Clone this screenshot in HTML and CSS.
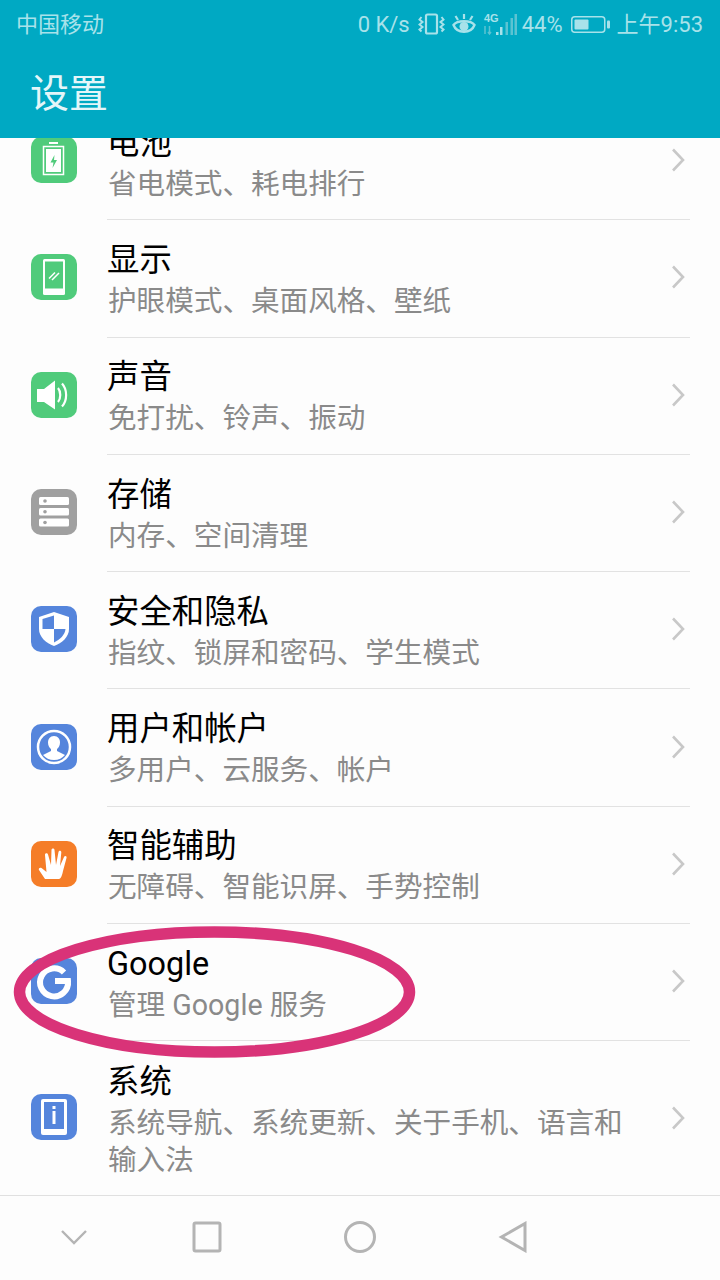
FILE: index.html
```html
<!DOCTYPE html>
<html lang="zh-CN">
<head>
    <meta charset="UTF-8">
    <meta name="viewport" content="width=device-width, initial-scale=1.0">
    <title>设置</title>
    <link rel="stylesheet" href="styles.css">
</head>
<body>
<div class="phone">
    <header class="topbar">
        <div class="status">
            <span class="carrier">中国移动</span>
            <div class="status-right">
                <span class="speed">0 K/s</span>
                <svg class="st-vibrate" width="27" height="24" viewBox="0 0 27 24" fill="none" stroke="#a8e2ea">
                    <rect x="8" y="2.500" width="11" height="19" rx="1.500" stroke-width="2.200"/>
                    <path d="M3.500 5l-2 2.500 3 2.500-3 2.500 3 2.500-3 2.500 2 2M23.500 5l2 2.500-3 2.500 3 2.500-3 2.500 3 2.500-2 2" stroke-width="2"/>
                </svg>
                <svg class="st-eye" width="24" height="22" viewBox="0 0 24 22" fill="none" stroke="#a8e2ea">
                    <path d="M1.500 12C5 7 19 7 22.500 12C19 21 5 21 1.500 12Z" stroke-width="2.400"/>
                    <circle cx="12" cy="13.500" r="4.500" fill="#a8e2ea" stroke="none"/>
                    <path d="M3.500 3l2.500 4M12 1v5M20.500 3L18 7" stroke-width="2.200"/>
                </svg>
                <svg class="st-signal" width="34" height="24" viewBox="0 0 34 24">
                    <text x="1" y="10" class="st-4g">4G</text>
                    <path d="M2 14v8M6.500 14v8M5 20l1.500 2 1.500-2" fill="none" stroke="#5cc3d2" stroke-width="1.500"/>
                    <rect x="13" y="20" width="2.500" height="3" fill="#a8e2ea"/>
                    <rect x="17" y="15" width="2.500" height="8" fill="#a8e2ea"/>
                    <rect x="22.500" y="10" width="2.500" height="13" fill="#5cc3d2"/>
                    <rect x="27.500" y="6" width="2.500" height="17" fill="#5cc3d2"/>
                    <rect x="31.500" y="2" width="2.500" height="21" fill="#5cc3d2"/>
                </svg>
                <span class="pct">44%</span>
                <svg class="st-battery" width="39" height="17" viewBox="0 0 39 17" fill="none">
                    <rect x=".75" y=".75" width="33" height="15.500" rx="3" stroke="#a8e2ea" stroke-width="1.500"/>
                    <rect x="3.500" y="3.500" width="14" height="10" rx="1" fill="#a8e2ea"/>
                    <rect x="36" y="4.500" width="3" height="8" rx="1" fill="#a8e2ea"/>
                </svg>
                <span class="clock">上午9:53</span>
            </div>
        </div>
        <h1 class="title">设置</h1>
    </header>

    <main class="list-wrap">
        <ul class="list">
            <li class="row">
                <svg class="icon" viewBox="0 0 46 46">
                    <rect width="46" height="46" rx="10" fill="#50cb7b"/>
                    <path d="M18 5h9v2h-9z" fill="#fff"/>
                    <rect x="12.500" y="9.500" width="20" height="28" fill="none" stroke="#fff" stroke-width="1.500"/>
                    <rect x="15" y="12" width="15" height="23" fill="#fff"/>
                    <path d="M23.500 18l-4 7.500h3l-1 5.500 4.500-8h-3z" fill="#50cb7b"/>
                </svg>
                <div class="row-body">
                    <div class="text">
                        <div class="name">电池</div>
                        <div class="desc">省电模式、耗电排行</div>
                    </div>
                    <svg class="arrow" viewBox="0 0 14 24"><path d="M2 1.500L12 12L2 22.500"/></svg>
                </div>
            </li>
            <li class="row">
                <svg class="icon" viewBox="0 0 46 46">
                    <rect width="46" height="46" rx="10" fill="#50cb7b"/>
                    <rect x="12" y="5" width="22" height="36" rx="1.500" fill="#fff"/>
                    <rect x="14" y="7.500" width="18" height="27" fill="#50cb7b"/>
                    <path d="M18 24.500l6-6M21 26l7-7" stroke="#fff" stroke-width="1.500" fill="none"/>
                </svg>
                <div class="row-body">
                    <div class="text">
                        <div class="name">显示</div>
                        <div class="desc">护眼模式、桌面风格、壁纸</div>
                    </div>
                    <svg class="arrow" viewBox="0 0 14 24"><path d="M2 1.500L12 12L2 22.500"/></svg>
                </div>
            </li>
            <li class="row">
                <svg class="icon" viewBox="0 0 46 46">
                    <rect width="46" height="46" rx="10" fill="#50cb7b"/>
                    <path d="M6 17h7l11-8.500v29L13 30H6z" fill="#fff"/>
                    <path d="M27 16c3 3.500 3 10.500 0 14M31 11.500c5.500 6 5.500 17 0 23" fill="none" stroke="#fff" stroke-width="2.200"/>
                </svg>
                <div class="row-body">
                    <div class="text">
                        <div class="name">声音</div>
                        <div class="desc">免打扰、铃声、振动</div>
                    </div>
                    <svg class="arrow" viewBox="0 0 14 24"><path d="M2 1.500L12 12L2 22.500"/></svg>
                </div>
            </li>
            <li class="row">
                <svg class="icon" viewBox="0 0 46 46">
                    <rect width="46" height="46" rx="10" fill="#a0a0a0"/>
                    <rect x="8" y="8" width="30" height="8" rx="1.500" fill="#fff"/>
                    <rect x="8" y="19" width="30" height="7.500" rx="1.500" fill="#fff"/>
                    <rect x="8" y="29.500" width="30" height="8" rx="1.500" fill="#fff"/>
                    <circle cx="14" cy="12" r="1.800" fill="#a0a0a0"/>
                    <circle cx="14" cy="22.700" r="1.800" fill="#a0a0a0"/>
                    <circle cx="14" cy="33.500" r="1.800" fill="#a0a0a0"/>
                </svg>
                <div class="row-body">
                    <div class="text">
                        <div class="name">存储</div>
                        <div class="desc">内存、空间清理</div>
                    </div>
                    <svg class="arrow" viewBox="0 0 14 24"><path d="M2 1.500L12 12L2 22.500"/></svg>
                </div>
            </li>
            <li class="row">
                <svg class="icon" viewBox="0 0 46 46">
                    <rect width="46" height="46" rx="10" fill="#5585dc"/>
                    <path d="M23 6l15 5v12c0 8-7 14-15 17C15 37 8 31 8 23V11z" fill="#fff"/>
                    <path d="M23 9.500V23H11.500V13zM23 23h11.500c-.5 6-5.500 10.500-11.500 13.500z" fill="#5585dc"/>
                </svg>
                <div class="row-body">
                    <div class="text">
                        <div class="name">安全和隐私</div>
                        <div class="desc">指纹、锁屏和密码、学生模式</div>
                    </div>
                    <svg class="arrow" viewBox="0 0 14 24"><path d="M2 1.500L12 12L2 22.500"/></svg>
                </div>
            </li>
            <li class="row">
                <svg class="icon" viewBox="0 0 46 46">
                    <rect width="46" height="46" rx="10" fill="#5585dc"/>
                    <circle cx="23" cy="23" r="16" fill="none" stroke="#fff" stroke-width="2.500"/>
                    <path d="M23 12c4 0 6 3 6 6.500 0 3-1.500 5.500-3 6.500v2l8 4c-2.500 3-6.500 5-11 5s-8.500-2-11-5l8-4v-2c-1.500-1-3-3.500-3-6.500C17 15 19 12 23 12z" fill="#fff"/>
                </svg>
                <div class="row-body">
                    <div class="text">
                        <div class="name">用户和帐户</div>
                        <div class="desc">多用户、云服务、帐户</div>
                    </div>
                    <svg class="arrow" viewBox="0 0 14 24"><path d="M2 1.500L12 12L2 22.500"/></svg>
                </div>
            </li>
            <li class="row">
                <svg class="icon" viewBox="0 0 46 46">
                    <rect width="46" height="46" rx="10" fill="#f57d28"/>
                    <path d="M14 38l-6-9c-1-1.500 1-3 2.500-2l5 4L14 14c-.3-2 2.500-2.500 3-.5L20 24l.5-15c0-2 3-2 3 0L25 24l2.500-13c.4-2 3-1.500 2.800.5L29 25l4-9c.8-1.800 3.200-1 2.500 1L32 30c-.8 4-2 8-4 8z" fill="#fff"/>
                </svg>
                <div class="row-body">
                    <div class="text">
                        <div class="name">智能辅助</div>
                        <div class="desc">无障碍、智能识屏、手势控制</div>
                    </div>
                    <svg class="arrow" viewBox="0 0 14 24"><path d="M2 1.500L12 12L2 22.500"/></svg>
                </div>
            </li>
            <li class="row">
                <svg class="icon" viewBox="0 0 46 46">
                    <rect width="46" height="46" rx="10" fill="#5585dc"/>
                    <path d="M33 14.500A14 14 0 1 0 37 23H24" fill="none" stroke="#fff" stroke-width="6"/>
                </svg>
                <div class="row-body">
                    <div class="text">
                        <div class="name">Google</div>
                        <div class="desc">管理 Google 服务</div>
                    </div>
                    <svg class="arrow" viewBox="0 0 14 24"><path d="M2 1.500L12 12L2 22.500"/></svg>
                </div>
            </li>
            <li class="row row-last">
                <svg class="icon" viewBox="0 0 46 46">
                    <rect width="46" height="46" rx="10" fill="#5585dc"/>
                    <rect x="10" y="5" width="26" height="36" rx="2" fill="#fff"/>
                    <rect x="13" y="8" width="20" height="27" fill="#5585dc"/>
                    <rect x="21.500" y="12" width="3" height="3" fill="#fff"/>
                    <rect x="21.500" y="17" width="3" height="13" fill="#fff"/>
                </svg>
                <div class="row-body">
                    <div class="text">
                        <div class="name">系统</div>
                        <div class="desc">系统导航、系统更新、关于手机、语言和输入法</div>
                    </div>
                    <svg class="arrow" viewBox="0 0 14 24"><path d="M2 1.500L12 12L2 22.500"/></svg>
                </div>
            </li>
        </ul>
    </main>

    <nav class="navbar">
        <svg class="nav-down" width="28" height="16" viewBox="0 0 28 16"><path d="M2 2l12 12L26 2"/></svg>
        <svg width="32" height="32" viewBox="0 0 32 32"><rect x="3" y="2" width="26" height="28" rx="1.500"/></svg>
        <svg width="32" height="32" viewBox="0 0 32 32"><circle cx="16" cy="16" r="14.500"/></svg>
        <svg width="32" height="32" viewBox="0 0 32 32"><path d="M28 2.500V29.500L4.500 16Z"/></svg>
    </nav>

    <svg class="ring" width="440" height="150" viewBox="0 0 440 150">
        <ellipse cx="214.500" cy="67" rx="195" ry="60"/>
    </svg>
</div>
</body>
</html>
```

FILE: styles.css
```css
* {
    box-sizing: border-box;
}
body {
    margin: 0;
    font-family: Roboto, "Noto Sans CJK SC", sans-serif;
    background-color: #fdfdfd;
}
.phone {
    position: relative;
    width: 720px;
    height: 1280px;
    display: flex;
    flex-direction: column;
    overflow: hidden;
}
.topbar {
    flex: none;
    height: 138px;
    background-color: #00a9c3;
    z-index: 1;
}
.status {
    height: 48px;
    padding: 0 17px 0 16px;
    display: flex;
    align-items: center;
    justify-content: space-between;
    color: #a8e2ea;
    font-size: 22px;
}
.status-right {
    display: flex;
    align-items: center;
}
.carrier, .clock {
    padding-bottom: 4px;
}
.st-vibrate {
    margin-left: 8px;
}
.st-eye {
    margin-left: 7px;
}
.st-signal {
    margin-left: 7px;
}
.st-4g {
    font: bold 11px "Liberation Sans", sans-serif;
    fill: #a8e2ea;
}
.pct {
    margin-left: 5px;
}
.st-battery {
    margin-left: 8px;
}
.clock {
    margin-left: 7px;
}
.title {
    margin: 0;
    padding: 4px 0 0 30px;
    color: #e4f6f9;
    font-size: 39px;
    font-weight: 400;
    line-height: 84px;
}
.list-wrap {
    flex: 1;
    overflow: hidden;
}
.list {
    list-style: none;
    margin: -35px 0 0;
    padding: 0;
}
.row {
    height: 117.3px;
    display: flex;
    align-items: center;
    padding-left: 31px;
}
.row-last {
    height: 155px;
}
.icon {
    flex: none;
    width: 46px;
    height: 46px;
    margin: 0 30px 3px 0;
}
.row-body {
    flex: 1;
    height: 100%;
    margin-right: 30px;
    display: flex;
    align-items: center;
    border-bottom: 1px solid #e2e2e2;
}
.row-last .row-body {
    border-bottom: none;
}
.text {
    flex: 1;
    padding-left: 1px;
}
.name {
    margin-left: -1px;
    color: #000;
    font-size: 32.4px;
    line-height: 46px;
}
.desc {
    color: #8a8a8a;
    font-size: 28.6px;
    line-height: 37px;
    max-width: 520px;
}
.arrow {
    flex: none;
    width: 14px;
    height: 24px;
    margin: 0 5px 2px 0;
    fill: none;
    stroke: #c8c8c8;
    stroke-width: 2.6;
}
.navbar {
    flex: none;
    height: 85px;
    padding: 0 0 3px 60px;
    display: flex;
    align-items: center;
    gap: 121px;
    border-top: 1px solid #e0e0e0;
    background-color: #fdfdfd;
}
.navbar svg {
    fill: none;
    stroke: #b4b4b4;
    stroke-width: 3;
}
.navbar .nav-down {
    margin-right: -18px;
    stroke-width: 2.4;
}
.ring {
    position: absolute;
    left: 0;
    top: 925px;
    fill: none;
    stroke: #d93378;
    stroke-width: 11.500;
}
```
